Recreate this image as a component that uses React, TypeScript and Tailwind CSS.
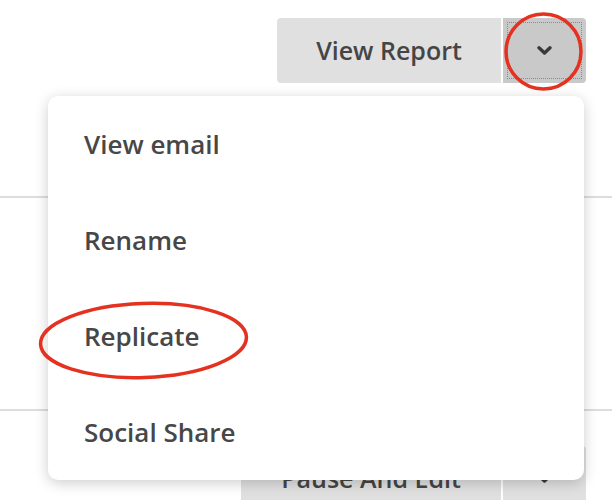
const menuItems = ['View email', 'Rename', 'Replicate', 'Social Share'];

const Chevron = ({ size = 15 }: { size?: number }) => (
  <svg width={size} height={size * 0.6} viewBox="0 0 15 9" fill="none">
    <path d="M2 1.8 L7.5 7 L13 1.8" stroke="#3a3a3a" strokeWidth="3.4" strokeLinecap="round" strokeLinejoin="round" />
  </svg>
);

const SplitButton = ({ label, width, focused }: { label: string; width: string; focused?: boolean }) => (
  <div className="flex h-[65px] gap-[2px]">
    <button className={`${width} h-full rounded-l-[4px] bg-[#e0e0e0] text-[25px] font-semibold text-[#454545]`}>
      {label}
    </button>
    <button
      className={
        focused
          ? 'flex h-full w-[83px] items-center justify-center rounded-r-[4px] bg-[#c9c9c9] p-[4px]'
          : 'flex h-full w-[83px] items-center justify-center rounded-r-[4px] bg-[#e0e0e0] p-[4px]'
      }
    >
      <span
        className={
          focused
            ? 'flex h-full w-full items-center justify-center border border-dotted border-[#8a8a8a]'
            : 'flex h-full w-full items-center justify-center'
        }
      >
        <Chevron />
      </span>
    </button>
  </div>
);

export default function App() {
  return (
    <div
      className="relative h-[500px] w-[612px] overflow-hidden bg-white"
      style={{ fontFamily: '"Open Sans", "Liberation Sans", sans-serif' }}
    >
      {/* page behind the menu */}
      <div className="flex justify-end pr-[26px] pt-[18px]">
        <SplitButton label="View Report" width="w-[224px]" focused />
      </div>
      <div className="h-[115px] border-b-2 border-[#dddddd]" />
      <div className="h-[213px] border-b-2 border-[#dddddd]" />
      <div className="flex justify-end pr-[26px] pt-[35px]">
        <SplitButton label="Pause And Edit" width="w-[260px]" />
      </div>

      {/* dropdown menu */}
      <div className="absolute left-[48px] top-[96px] flex w-[536px] flex-col rounded-[10px] bg-white shadow-[0_3px_14px_rgba(0,0,0,0.2)]">
        {menuItems.map(item => (
          <div key={item} className="flex h-[96px] items-center pl-[36px] text-[26px] font-semibold text-[#474747]">
            {item}
          </div>
        ))}
      </div>

      {/* red annotation marks */}
      <svg className="pointer-events-none absolute inset-0" width="612" height="500">
        <circle cx="543.5" cy="51.5" r="37.5" fill="none" stroke="#e5311f" strokeWidth="3.5" />
        <ellipse cx="143.5" cy="340.5" rx="103" ry="37" fill="none" stroke="#e5311f" strokeWidth="3.5" transform="rotate(-2 143.5 340.5)" />
      </svg>
    </div>
  );
}
